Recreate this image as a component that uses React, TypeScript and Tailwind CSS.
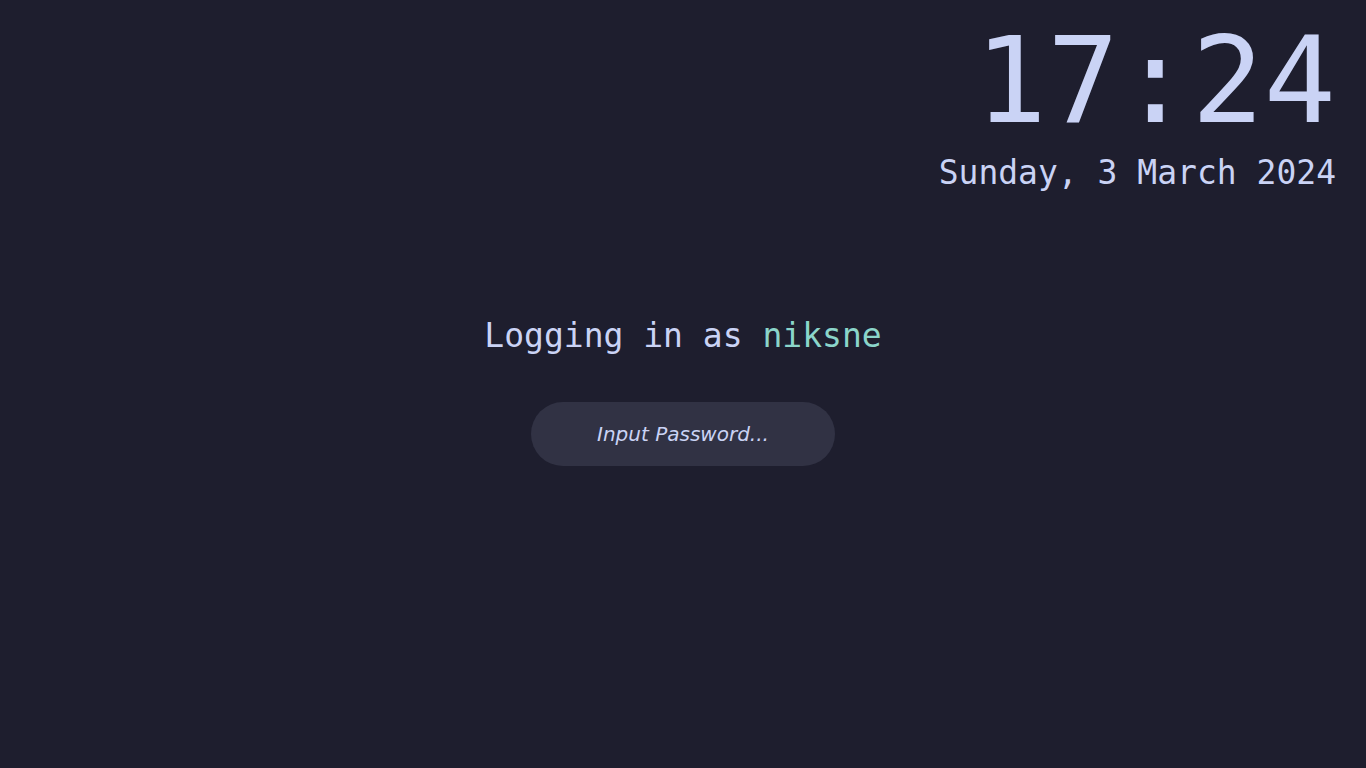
export default function App() {
  const mono = "font-['DejaVu_Sans_Mono','Liberation_Mono',monospace]"

  return (
    <div className="min-h-screen w-full bg-[#1e1e2e] text-[#cad3f5] flex flex-col">
      <div className={`flex flex-col items-end pr-[30px] pt-[21px] ${mono}`}>
        <p className="text-[120px] leading-[120px]">17:24</p>
        <p className="mt-[12px] text-[33px] leading-[40px]">Sunday, 3 March 2024</p>
      </div>

      <div className="flex flex-col items-center">
        <p className={`mt-[123px] text-[33px] leading-[40px] ${mono}`}>
          Logging in as <span className="text-[#8bd5ca]">niksne</span>
        </p>
        <input
          type="password"
          placeholder="Input Password..."
          className="mt-[46px] h-[64px] w-[304px] rounded-full bg-[#313244] text-center text-[20px] italic font-['DejaVu_Sans',sans-serif] text-[#cad3f5] placeholder:text-[#cad3f5] outline-none"
        />
      </div>
    </div>
  )
}
